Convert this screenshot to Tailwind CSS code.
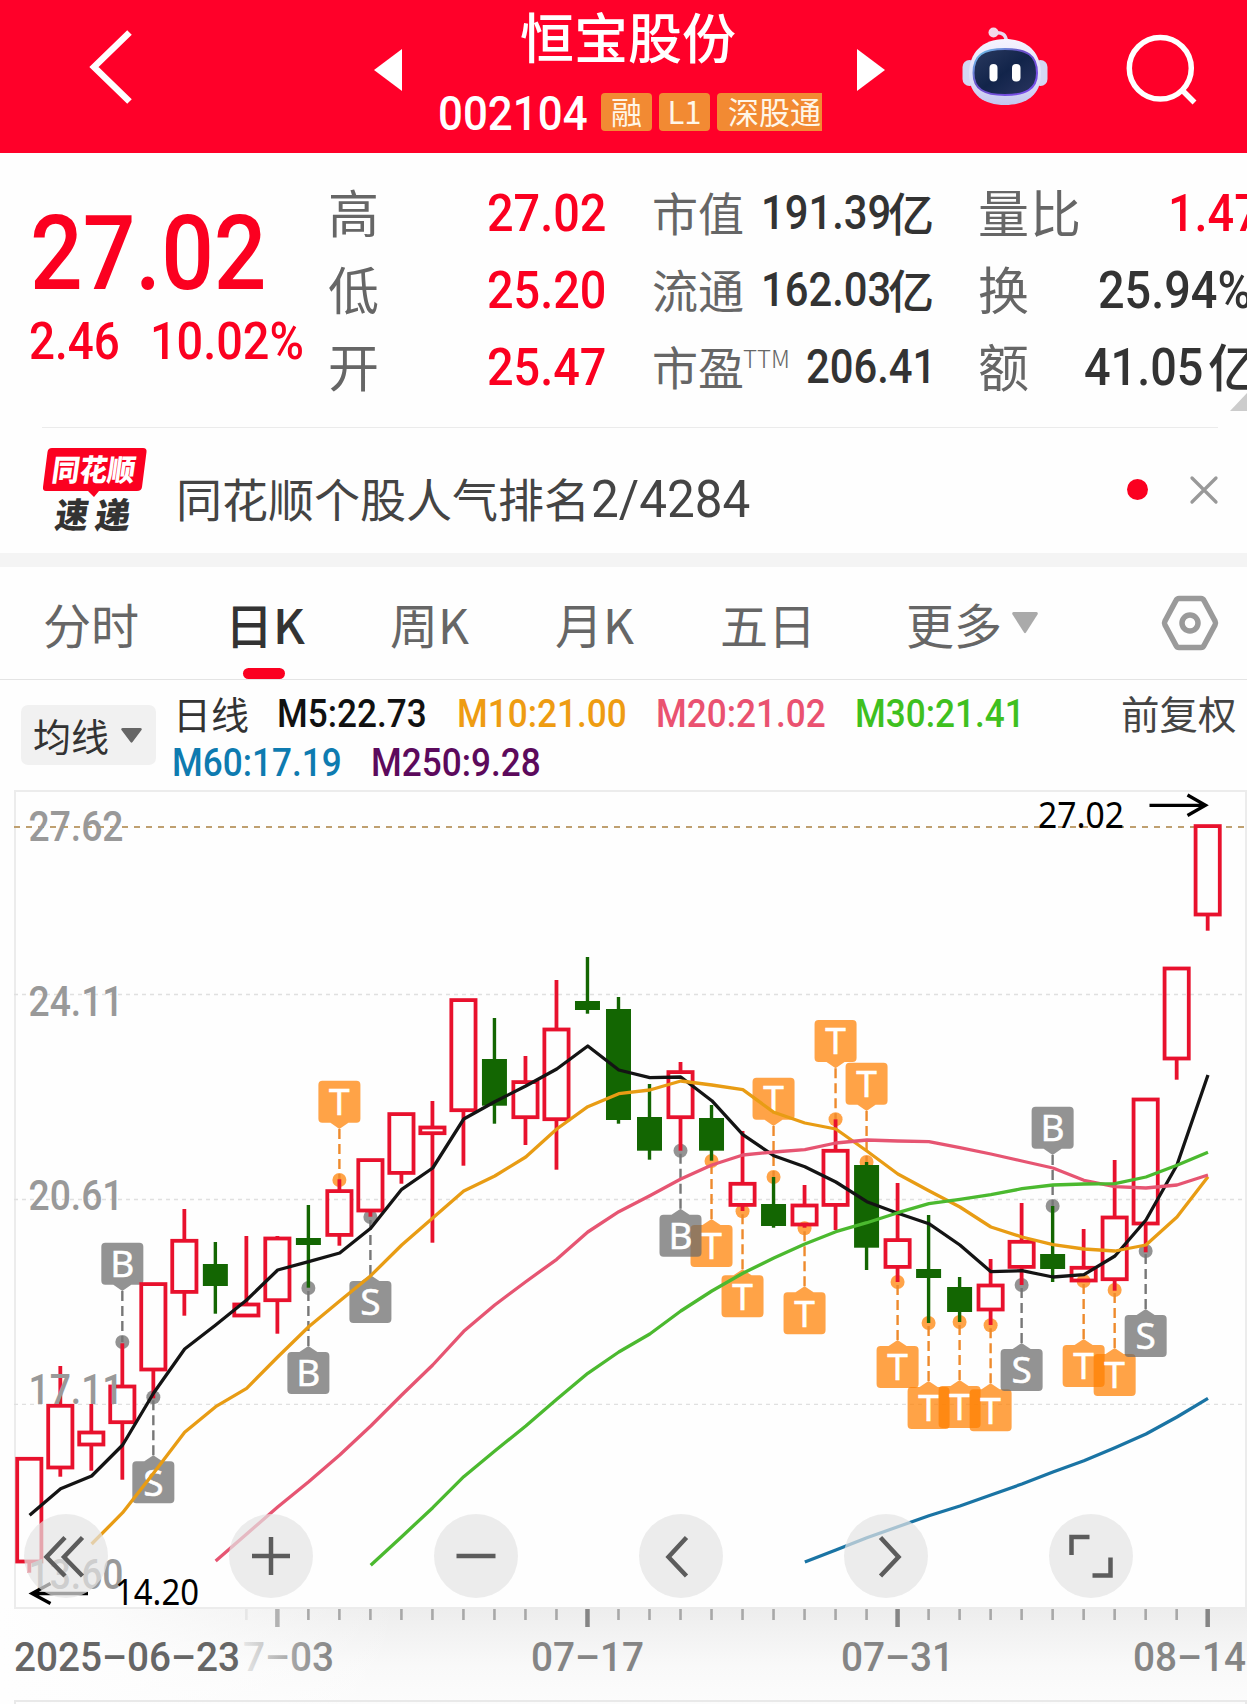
<!DOCTYPE html>
<html lang="zh-CN">
<head>
<meta charset="utf-8">
<title>恒宝股份 002104</title>
<script src="https://cdn.jsdelivr.net/npm/@tailwindcss/browser@4"></script>
</head>
<body class="bg-white">
<div class="w-[1247px] h-[1704px] overflow-hidden bg-[#fefefe] font-['Noto_Sans_CJK_SC',sans-serif] text-[#333]">

  <!-- Header -->
  <header class="flex h-[153px] bg-[#ff0029] text-white">
    <svg class="ml-[84px] mt-[25px] w-[56px] h-[84px] shrink-0" viewBox="0 0 56 84" fill="none" stroke="#fff" stroke-width="6.500"><path d="M45.500 7.500 L10 42 L45.500 76.500"/></svg>
    <svg class="ml-[234px] mt-[49px] w-[28px] h-[42px] shrink-0" viewBox="0 0 28 42" fill="#fff"><path d="M0 21 L28 0 V42Z"/></svg>
    <div class="ml-[36px] w-[384px] shrink-0 flex flex-col">
      <h1 class="pl-[82px] h-[71px] leading-[71px] text-[54px] font-medium whitespace-nowrap">恒宝股份</h1>
      <div class="flex mt-[22px] h-[38px]">
        <div class="w-[163px] leading-[41px] text-[49px] font-medium font-['Roboto',sans-serif]"><span class="inline-block origin-left scale-x-[.895]">002104</span></div>
        <div class="flex gap-[7px] text-[31px] leading-[35px] text-[#fff6e8]">
          <span class="w-[51px] rounded-[4px] bg-[#f28a33] text-center">融</span>
          <span class="w-[51px] rounded-[4px] bg-[#f28a33] text-center">L1</span>
          <span class="w-[105px] rounded-l-[4px] bg-[#f28a33] pl-[11px] whitespace-nowrap">深股通</span>
        </div>
      </div>
    </div>
    <svg class="ml-[35px] mt-[49px] w-[28px] h-[42px] shrink-0" viewBox="0 0 28 42" fill="#fff"><path d="M28 21 L0 0 V42Z"/></svg>
    <svg class="ml-[75px] mt-[24px] w-[90px] h-[86px] shrink-0" viewBox="960 24 90 86">
      <defs>
        <linearGradient id="shell" x1="0" y1="0" x2="0" y2="1"><stop offset="0" stop-color="#f6f4ff"/><stop offset=".65" stop-color="#dcdcf6"/><stop offset="1" stop-color="#c3c6f0"/></linearGradient>
        <linearGradient id="rim" x1="0" y1="0" x2="1" y2="1"><stop offset="0" stop-color="#6fd8f0"/><stop offset=".4" stop-color="#6a50c8"/><stop offset="1" stop-color="#7a4cf0"/></linearGradient>
        <linearGradient id="visor" x1="0" y1="0" x2="1" y2="1"><stop offset="0" stop-color="#2b3a60"/><stop offset=".5" stop-color="#12244a"/><stop offset="1" stop-color="#2a3560"/></linearGradient>
      </defs>
      <path d="M994 33 Q1006 31 1006.500 42" fill="none" stroke="#e9d9f0" stroke-width="3.500"/>
      <circle cx="993.500" cy="32.500" r="5" fill="#f3d9ea"/>
      <rect x="962.500" y="60" width="14" height="26" rx="7" fill="#d4d6f4"/>
      <rect x="1033.500" y="60" width="14" height="26" rx="7" fill="#d4d6f4"/>
      <path d="M1005 39 C1028 39 1041 53 1041 74 C1041 95 1026 105 1005 105 C984 105 969 95 969 74 C969 53 982 39 1005 39Z" fill="url(#shell)"/>
      <path d="M1005 49 C1027 49 1037 55 1037 73 C1037 89 1026 95 1005 95 C984 95 973.500 89 973.500 73 C973.500 55 983 49 1005 49Z" fill="url(#visor)" stroke="url(#rim)" stroke-width="2"/>
      <rect x="989.500" y="64" width="8" height="17.500" rx="4" fill="#fff"/>
      <rect x="1012" y="64" width="8.500" height="17.500" rx="4" fill="#fff"/>
    </svg>
    <svg class="ml-[73px] mt-[30px] w-[80px] h-[80px] shrink-0" viewBox="1123 30 80 80" fill="none" stroke="#fff" stroke-width="5.500"><ellipse cx="1160.300" cy="68.300" rx="31" ry="30.800"/><path d="M1181 89 L1194.500 102.500"/></svg>
  </header>

  <!-- Quote summary -->
  <section class="relative flex h-[274px] pt-[21px] whitespace-nowrap">
    <div class="w-[328px] shrink-0 pl-[30px] text-[#fb0020] font-medium font-['Roboto',sans-serif]">
      <div class="mt-[32px] h-[96px] leading-[96px] text-[103px]"><span class="inline-block origin-left scale-x-[.9]">27.02</span></div>
      <div class="-ml-[1px] mt-[10px] flex h-[60px] leading-[60px] text-[52px]"><div class="w-[121px]"><span class="inline-block origin-left scale-x-[.88]">2.46</span></div><div><span class="inline-block origin-left scale-x-[.9]">10.02%</span></div></div>
    </div>
    <div class="w-[324px] shrink-0 text-[51px] leading-[74px] text-[#666]">
      <div class="flex h-[77px]"><span class="w-[159px]">高</span><span class="origin-left scale-x-[.9] font-medium font-['Roboto',sans-serif] leading-[79px] text-[52px] text-[#fb0020]">27.02</span></div>
      <div class="flex h-[77px]"><span class="w-[159px]">低</span><span class="origin-left scale-x-[.9] font-medium font-['Roboto',sans-serif] leading-[79px] text-[52px] text-[#fb0020]">25.20</span></div>
      <div class="flex h-[77px]"><span class="w-[159px]">开</span><span class="origin-left scale-x-[.9] font-medium font-['Roboto',sans-serif] leading-[79px] text-[52px] text-[#fb0020]">25.47</span></div>
    </div>
    <div class="w-[326px] shrink-0 text-[46px] leading-[74px] text-[#666]">
      <div class="flex h-[77px]"><span class="w-[109px]">市值</span><span class="w-[127px] origin-left scale-x-[.87] font-medium font-['Roboto',sans-serif] leading-[78px] text-[48px] text-[#333]">191.39</span><span class="font-medium text-[#333]">亿</span></div>
      <div class="flex h-[77px]"><span class="w-[109px]">流通</span><span class="w-[127px] origin-left scale-x-[.87] font-medium font-['Roboto',sans-serif] leading-[78px] text-[48px] text-[#333]">162.03</span><span class="font-medium text-[#333]">亿</span></div>
      <div class="flex h-[77px]"><span class="w-[91px]">市盈</span><span class="w-[63px] h-[77px] origin-left text-[24px] leading-[60px] font-light">TTM</span><span class="origin-left scale-x-[.87] font-medium font-['Roboto',sans-serif] leading-[78px] text-[48px] text-[#333]">206.41</span></div>
    </div>
    <div class="w-[400px] shrink-0 text-[51px] leading-[74px] text-[#666]">
      <div class="flex h-[77px]"><span class="w-[190px] tracking-[1px]">量比</span><span class="origin-left scale-x-[.9] font-medium font-['Roboto',sans-serif] leading-[79px] text-[52px] text-[#fb0020]">1.47</span></div>
      <div class="flex h-[77px]"><span class="w-[120px]">换</span><span class="origin-left scale-x-[.9] font-medium font-['Roboto',sans-serif] leading-[79px] text-[52px] text-[#333]">25.94%</span></div>
      <div class="flex h-[77px]"><span class="w-[106px]">额</span><span class="w-[124px] origin-left scale-x-[.9] font-medium font-['Roboto',sans-serif] leading-[79px] text-[52px] text-[#333]">41.05</span><span class="font-medium text-[#333]">亿</span></div>
    </div>
    <svg class="absolute left-[1230px] top-[240px] w-[17px] h-[18px]" viewBox="0 0 17 18"><path d="M0 18 L17 0 V18Z" fill="#ccc"/></svg>
  </section>

  <!-- Notice -->
  <section class="mx-[42px] h-[126px] w-[1176px] border-t border-[#ebebeb] flex whitespace-nowrap">
    <svg class="mt-[16px] w-[108px] h-[92px] shrink-0" viewBox="42 444 108 92">
      <path d="M52 448 H143 Q147 448 146.500 452 L142 487 Q141.500 491 137 491 H99 L94 497 L88 491 H46 Q42.500 491 43 487 L47.500 452 Q48 448 52 448Z" fill="#fb0020"/>
      <g font-family="'Noto Sans CJK SC',sans-serif" font-weight="900" transform="skewX(-8)">
        <text x="118.500" y="481.500" font-size="30" fill="#fff" textLength="83" lengthAdjust="spacingAndGlyphs">同花顺</text>
        <text x="128" y="528" font-size="35" fill="#333" textLength="33" lengthAdjust="spacingAndGlyphs">速</text>
        <text x="168" y="528" font-size="35" fill="#333" textLength="35" lengthAdjust="spacingAndGlyphs">递</text>
      </g>
    </svg>
    <div class="ml-[26px] w-[934px] shrink-0 flex text-[46px] leading-[138px] h-[126px] text-[#444]"><span>同花顺个股人气排名</span><span class="origin-left scale-x-[.97] pl-[1px] font-['Roboto',sans-serif] text-[51px] leading-[143px]">2/4284</span></div>
    <span class="ml-[17px] mt-[51px] size-[21px] shrink-0 rounded-full bg-[#fb0020]"></span>
    <svg class="ml-[41px] mt-[47px] w-[30px] h-[30px] shrink-0" viewBox="0 0 30 30" stroke="#999" stroke-width="3.300" stroke-linecap="round"><path d="M3 3 L27 27 M27 3 L3 27"/></svg>
  </section>

  <div class="h-[14px] bg-[#f4f4f4]"></div>

  <!-- Period tabs -->
  <nav class="flex h-[113px] border-b border-[#e4e4e4] text-[48px] leading-[112px] text-[#666] whitespace-nowrap">
    <span class="ml-[43px] w-[182px]">分时</span>
    <span class="relative w-[165px] text-[#333] font-medium">日K<i class="absolute left-[18px] top-[101px] h-[11px] w-[42px] rounded-full bg-[#fb0020]"></i></span>
    <span class="w-[165px]">周K</span>
    <span class="w-[165px]">月K</span>
    <span class="w-[186px]">五日</span>
    <span class="w-[106px]">更多</span>
    <svg class="mt-[45px] w-[26px] h-[22px] shrink-0" viewBox="0 0 26 22" fill="#aaa"><path d="M1.500 0 H24.500 Q26.500 .5 25.500 2.500 L14 20.500 Q13 22 12 20.500 L.5 2.500 Q-.5 .5 1.500 0Z"/></svg>
    <svg class="ml-[122px] mt-[27px] w-[60px] h-[58px] shrink-0" viewBox="0 0 60 58" fill="none" stroke="#9a9a9a" stroke-width="5.500" stroke-linejoin="round"><path d="M19 4.500 H41 Q43 4.500 44 6.500 L55 27 Q56 29 55 31 L44 51.500 Q43 53.500 41 53.500 H19 Q17 53.500 16 51.500 L5 31 Q4 29 5 27 L16 6.500 Q17 4.500 19 4.500Z"/><circle cx="30" cy="29" r="8"/></svg>
  </nav>

  <!-- Moving-average legend -->
  <section class="flex h-[110px] whitespace-nowrap">
    <div class="ml-[21px] mt-[25px] flex h-[60px] w-[135px] shrink-0 items-center rounded-[7px] bg-[#f1f1f1] pl-[12px] text-[38px] leading-[58px]">均线
      <svg class="ml-[12px] w-[21px] h-[15px]" viewBox="0 0 21 15" fill="#666"><path d="M1.500 0 H19.500 Q21.500 .5 20.500 2 L11.500 14 Q10.500 15.500 9.500 14 L.5 2 Q-.5 .5 1.500 0Z"/></svg>
    </div>
    <div class="ml-[17px] mt-[9px] w-[948px] shrink-0 font-medium font-['Roboto',sans-serif] text-[39.500px] leading-[50px]">
      <div class="flex h-[49px]">
        <span class="w-[104px] text-[38px] leading-[47px] font-normal font-['Noto_Sans_CJK_SC',sans-serif]">日线</span>
        <span class="w-[180px]"><b class="inline-block origin-left scale-x-[.89] font-medium text-[#111]">M5:22.73</b></span>
        <span class="w-[199px]"><b class="inline-block origin-left scale-x-[.89] font-medium text-[#ee9c12]">M10:21.00</b></span>
        <span class="w-[199px]"><b class="inline-block origin-left scale-x-[.89] font-medium text-[#ea5270]">M20:21.02</b></span>
        <span class="w-[180px]"><b class="inline-block origin-left scale-x-[.89] font-medium text-[#3fc01f]">M30:21.41</b></span>
      </div>
      <div class="flex h-[49px] -ml-[1px]">
        <span class="w-[199px]"><b class="inline-block origin-left scale-x-[.89] font-medium text-[#0e7bb0]">M60:17.19</b></span>
        <span><b class="inline-block origin-left scale-x-[.89] font-medium text-[#5c0a5c]">M250:9.28</b></span>
      </div>
    </div>
    <span class="mt-[9px] text-[38.500px] leading-[47px] text-[#444]">前复权</span>
  </section>

  <!-- K-line chart -->
  <section class="relative h-[914px]">
    <svg id="chart" class="block w-[1247px] h-[914px]" viewBox="0 790 1247 914">
      <defs>
        <linearGradient id="axisbg" x1="0" y1="0" x2="0" y2="1"><stop offset="0" stop-color="#ededed"/><stop offset=".6" stop-color="#f9f9f9"/><stop offset="1" stop-color="#fcfcfc"/></linearGradient>
        <linearGradient id="fade" x1="0" y1="0" x2="1" y2="0"><stop offset="0" stop-color="#fefefe"/><stop offset=".25" stop-color="#fefefe" stop-opacity=".85"/><stop offset="1" stop-color="#fefefe" stop-opacity="0"/></linearGradient>
        <linearGradient id="datefade" gradientUnits="userSpaceOnUse" x1="238" y1="0" x2="334" y2="0"><stop offset="0" stop-color="#858585" stop-opacity="0.1"/><stop offset=".6" stop-color="#858585" stop-opacity=".75"/><stop offset="1" stop-color="#858585"/></linearGradient>
      </defs>
      <rect x="0" y="1608" width="1247" height="96" fill="url(#axisbg)"/>
      <rect x="0" y="1608" width="400" height="96" fill="url(#fade)"/>
      <rect x="15" y="791" width="1231" height="817" fill="none" stroke="#ececec" stroke-width="2"/>
      <path d="M15 1704 V1701 H1246 V1704" fill="none" stroke="#e9e9e9" stroke-width="2"/>
      <path d="M14 994.500 H1246 M14 1199.500 H1246 M14 1404.300 H1246" stroke="#e0e0e0" stroke-width="1.300" stroke-dasharray="4 4"/>
      <path d="M14 827 H1246" stroke="#bfa070" stroke-width="1.800" stroke-dasharray="6 6"/>
      <g id="marks" font-family="'Noto Sans',sans-serif" font-size="37" text-anchor="middle"></g>
      <g id="candles"></g>
      <g id="lines" fill="none" stroke-width="3.300" stroke-linejoin="round"></g>
      <g font-family="Roboto,sans-serif" font-weight="500" font-size="42" fill="#999">
        <text x="28.500" y="841" textLength="95" lengthAdjust="spacingAndGlyphs">27.62</text>
        <text x="28.500" y="1016" textLength="95" lengthAdjust="spacingAndGlyphs">24.11</text>
        <text x="28.500" y="1210" textLength="95" lengthAdjust="spacingAndGlyphs">20.61</text>
        <text x="28.500" y="1404" textLength="95" lengthAdjust="spacingAndGlyphs">17.11</text>
        <text x="28.500" y="1589" textLength="95" lengthAdjust="spacingAndGlyphs">13.60</text>
      </g>
      <g font-family="'Noto Sans',sans-serif" font-size="36.500" fill="#000">
        <text x="1038" y="827.500" textLength="86" lengthAdjust="spacingAndGlyphs">27.02</text>
        <text x="115" y="1605" textLength="84" lengthAdjust="spacingAndGlyphs">14.20</text>
      </g>
      <path d="M1149.500 805.300 H1205 M1187.500 795 L1205.500 805.300 L1187.500 815.500 M88 1593.500 H32 M50.500 1583.500 L32 1593.500 L50.500 1603.500" fill="none" stroke="#000" stroke-width="3.300"/>
      <g id="ticks"></g>
      <g font-family="Roboto,sans-serif" font-weight="500" font-size="41.500" fill="#858585">
        <text x="14" y="1671" fill="#666" textLength="226" lengthAdjust="spacingAndGlyphs">2025–06–23</text>
        <text x="243" y="1671" fill="url(#datefade)" textLength="91" lengthAdjust="spacingAndGlyphs">7–03</text>
        <text x="531" y="1671" textLength="113" lengthAdjust="spacingAndGlyphs">07–17</text>
        <text x="841" y="1671" textLength="113" lengthAdjust="spacingAndGlyphs">07–31</text>
        <text x="1133" y="1671" textLength="113" lengthAdjust="spacingAndGlyphs">08–14</text>
      </g>
    </svg>
    <div class="absolute left-[24px] top-[724px] flex gap-[121px]">
      <button class="size-[84px] rounded-full bg-[#e4e4e4]/70"><svg viewBox="0 0 84 84" fill="none" stroke="#5c5c5c" stroke-width="4.500"><path d="M41 23.500 L22.500 43 L41 62 M58.500 23.500 L40 43 L58.500 62"/></svg></button>
      <button class="size-[84px] rounded-full bg-[#e4e4e4]/70"><svg viewBox="0 0 84 84" fill="none" stroke="#5c5c5c" stroke-width="4.500"><path d="M23 42 H61 M42 23 V61"/></svg></button>
      <button class="size-[84px] rounded-full bg-[#e4e4e4]/70"><svg viewBox="0 0 84 84" fill="none" stroke="#5c5c5c" stroke-width="4.500"><path d="M22.500 42 H61.500"/></svg></button>
      <button class="size-[84px] rounded-full bg-[#e4e4e4]/70"><svg viewBox="0 0 84 84" fill="none" stroke="#5c5c5c" stroke-width="4.500"><path d="M47.500 23.500 L29.500 43 L47.500 62"/></svg></button>
      <button class="size-[84px] rounded-full bg-[#e4e4e4]/70"><svg viewBox="0 0 84 84" fill="none" stroke="#5c5c5c" stroke-width="4.500"><path d="M36.500 23.500 L54.500 43 L36.500 62"/></svg></button>
      <button class="size-[84px] rounded-full bg-[#e4e4e4]/70"><svg viewBox="0 0 84 84" fill="none" stroke="#5c5c5c" stroke-width="4.500"><path d="M22.500 41 V23 H40.500 M43.500 61.500 H61.500 V43.500"/></svg></button>
    </div>
  </section>
</div>

<script>
  const NS = 'http://www.w3.org/2000/svg';
  const X = i => 29.300 + 31.010 * i;
  const add = (parent, tag, attrs, text) => {
    const el = document.createElementNS(NS, tag);
    for (const k in attrs) el.setAttribute(k, attrs[k]);
    if (text) el.textContent = text;
    parent.appendChild(el);
    return el;
  };

  // [direction, high, body top, body bottom, low]
  const candles = [
    [1,1457,1457,1563.3,1572.7],[1,1366,1404,1469.3,1476.7],[1,1404,1430.7,1446.3,1470.7],[1,1343.3,1384.7,1424,1479.7],
    [1,1282.3,1282.3,1371.3,1398.3],[1,1209,1239,1293.7,1315.7],[0,1242,1264,1286,1313.7],[1,1236,1302.7,1317.3,1317.3],
    [1,1236,1236.7,1302,1333.7],[0,1205,1238,1245,1287.7],[1,1179.3,1189.3,1236.7,1245.7],[1,1158.3,1158.3,1212.3,1216.7],
    [1,1112.3,1112.3,1174.7,1183.7],[1,1101,1125.7,1135,1242.7],[1,998.3,998.3,1112,1165.7],[0,1018,1059,1105.7,1123.7],
    [1,1056,1080.3,1119,1145],[1,980,1027.7,1121,1169.7],[0,957,1001,1010,1013.7],[0,997,1009,1120,1123.7],
    [0,1084,1117,1150.7,1159.7],[1,1062,1070.3,1119,1150.7],[0,1105,1118,1150.7,1160.7],[1,1131,1182,1206.7,1211],
    [0,1177,1204,1226,1227.7],[1,1185,1203.7,1226.3,1227.7],[1,1119.3,1149,1206.7,1230],[0,1162,1165,1247.7,1270],
    [1,1183,1238.3,1268.7,1282],[0,1215,1269,1278,1323],[0,1277,1287,1312,1322],[1,1259,1283.7,1311.3,1325],
    [1,1203,1240,1268.7,1285],[0,1206,1254,1269,1282],[1,1229,1266,1282.3,1282.3],[1,1160,1215.7,1281,1290.7],
    [1,1097.7,1097.7,1225.3,1252.3],[1,966.7,966.7,1060.3,1079.7],[1,824.3,824.3,916.3,930.7]
  ];
  const gc = document.getElementById('candles');
  candles.forEach(([up, hi, top, bot, lo], i) => {
    const x = X(i);
    if (up) {
      const s = '#e8112d';
      if (hi < top) add(gc, 'path', {d: `M${x} ${hi}V${top + 1}`, stroke: s, 'stroke-width': 3.8});
      if (lo > bot) add(gc, 'path', {d: `M${x} ${bot - 1}V${lo}`, stroke: s, 'stroke-width': 3.8});
      add(gc, 'rect', {x: x - 12.1, y: top + 1.8, width: 24.2, height: bot - top - 3.6, fill: 'none', stroke: s, 'stroke-width': 3.8});
    } else {
      add(gc, 'path', {d: `M${x} ${hi}V${lo}`, stroke: '#136602', 'stroke-width': 3.4});
      add(gc, 'rect', {x: x - 12.500, y: top, width: 25, height: bot - top, fill: '#136602'});
    }
  });

  const averages = [
    ['#141414', 0, [1515.3,1488.7,1476,1445,1393,1349,1325,1300,1270,1261.7,1253,1228.3,1189.3,1168,1119,1101.7,1086,1069,1046,1070,1077.7,1077,1100.7,1134.7,1155.7,1166.7,1182,1201.7,1213.3,1223.7,1245,1271.7,1270.7,1277,1274.7,1256,1220,1165,1075]],
    ['#e89c14', 2, [1544,1512.7,1473,1432.3,1406.7,1388.3,1357,1326.7,1301,1275.7,1245,1218,1191,1176,1157,1129,1106.7,1093.7,1090,1081,1085,1089.7,1112.3,1123,1129,1151,1174,1190.7,1207,1227,1237,1244.7,1249,1251,1245,1217,1176.7]],
    ['#e65572', 6, [1561,1534,1507,1481.7,1455,1426,1395,1365,1331.3,1305,1281.7,1259.3,1232,1211.7,1195.7,1179,1165,1155,1152,1149.7,1143,1140,1141,1141.7,1147.7,1154,1161,1168,1180.3,1186.7,1188,1185,1175]],
    ['#4bb92f', 11, [1565.3,1536.7,1507.7,1476.7,1451,1426,1399.3,1373.3,1352,1334,1311,1291,1273.3,1258,1244,1231.7,1222.7,1212.7,1203.7,1199.3,1194.7,1188.7,1185,1184,1183.7,1177,1165.3,1152.3]],
    ['#1a74a4', 25, [1562,1550,1537.7,1526.7,1515.7,1506,1495,1484,1472,1460.7,1447.7,1434,1417,1398.3]]
  ];
  const gl = document.getElementById('lines');
  averages.forEach(([color, start, ys]) =>
    add(gl, 'polyline', {stroke: color, points: ys.map((y, k) => `${X(start + k) + .3},${y}`).join(' ')}));

  // [index, letter, dot y, marker above the candle]
  const marks = [
    [10,'T',1180,1],[24,'T',1177,1],[26,'T',1119.3,1],[27,'T',1162,1],[33,'B',1206,1],[3,'B',1342,1],
    [4,'S',1397.3],[9,'B',1288],[11,'S',1217],[22,'T',1161],[21,'B',1150.7],[23,'T',1211.3],[25,'T',1228.3],[28,'T',1282],
    [29,'T',1323],[30,'T',1322],[31,'T',1325.3],[32,'S',1285],[34,'T',1281],[35,'T',1290],[36,'S',1251]
  ];
  const gm = document.getElementById('marks');
  marks.forEach(([i, letter, dot, above]) => {
    const x = X(i), orange = letter === 'T';
    const fill = orange ? '#ff8000' : '#6a6a6a';
    const top = above ? dot - 99.3 : dot + 64;
    const tip = above ? dot - 51 : dot + 58;
    const g = add(gm, 'g', {});
    add(g, 'circle', {cx: x, cy: dot, r: 7, fill, 'fill-opacity': .72});
    add(g, 'path', {d: `M${x} ${tip}V${dot}`, stroke: orange ? '#ee8a2c' : '#777', 'stroke-width': 2.4, 'stroke-dasharray': '10 5'});
    const l = x - 21, r = x + 21, t = top, b = top + 42;
    const d = above
      ? `M${l + 4} ${t}H${r - 4}Q${r} ${t} ${r} ${t + 4}V${b - 4}Q${r} ${b} ${r - 4} ${b}H${x + 9}L${x} ${tip}L${x - 9} ${b}H${l + 4}Q${l} ${b} ${l} ${b - 4}V${t + 4}Q${l} ${t} ${l + 4} ${t}Z`
      : `M${l + 4} ${t}H${x - 9}L${x} ${tip}L${x + 9} ${t}H${r - 4}Q${r} ${t} ${r} ${t + 4}V${b - 4}Q${r} ${b} ${r - 4} ${b}H${l + 4}Q${l} ${b} ${l} ${b - 4}V${t + 4}Q${l} ${t} ${l + 4} ${t}Z`;
    add(g, 'path', {d, fill, 'fill-opacity': .72});
    add(g, 'text', {x, y: top + 34.300, fill: '#fff', stroke: '#fff', 'stroke-width': .5}, letter);
  });

  const gt = document.getElementById('ticks');
  for (let i = 7; i < 39; i++) {
    const major = i % 10 === 8;
    add(gt, 'path', {
      d: `M${X(i)} 1609V${major ? 1627 : 1620}`,
      stroke: i === 7 ? '#e6e6e6' : i === 8 ? '#b2b2b2' : major ? '#858585' : '#a8a8a8',
      'stroke-width': major ? 4.500 : 2.600
    });
  }
</script>
</body>
</html>
